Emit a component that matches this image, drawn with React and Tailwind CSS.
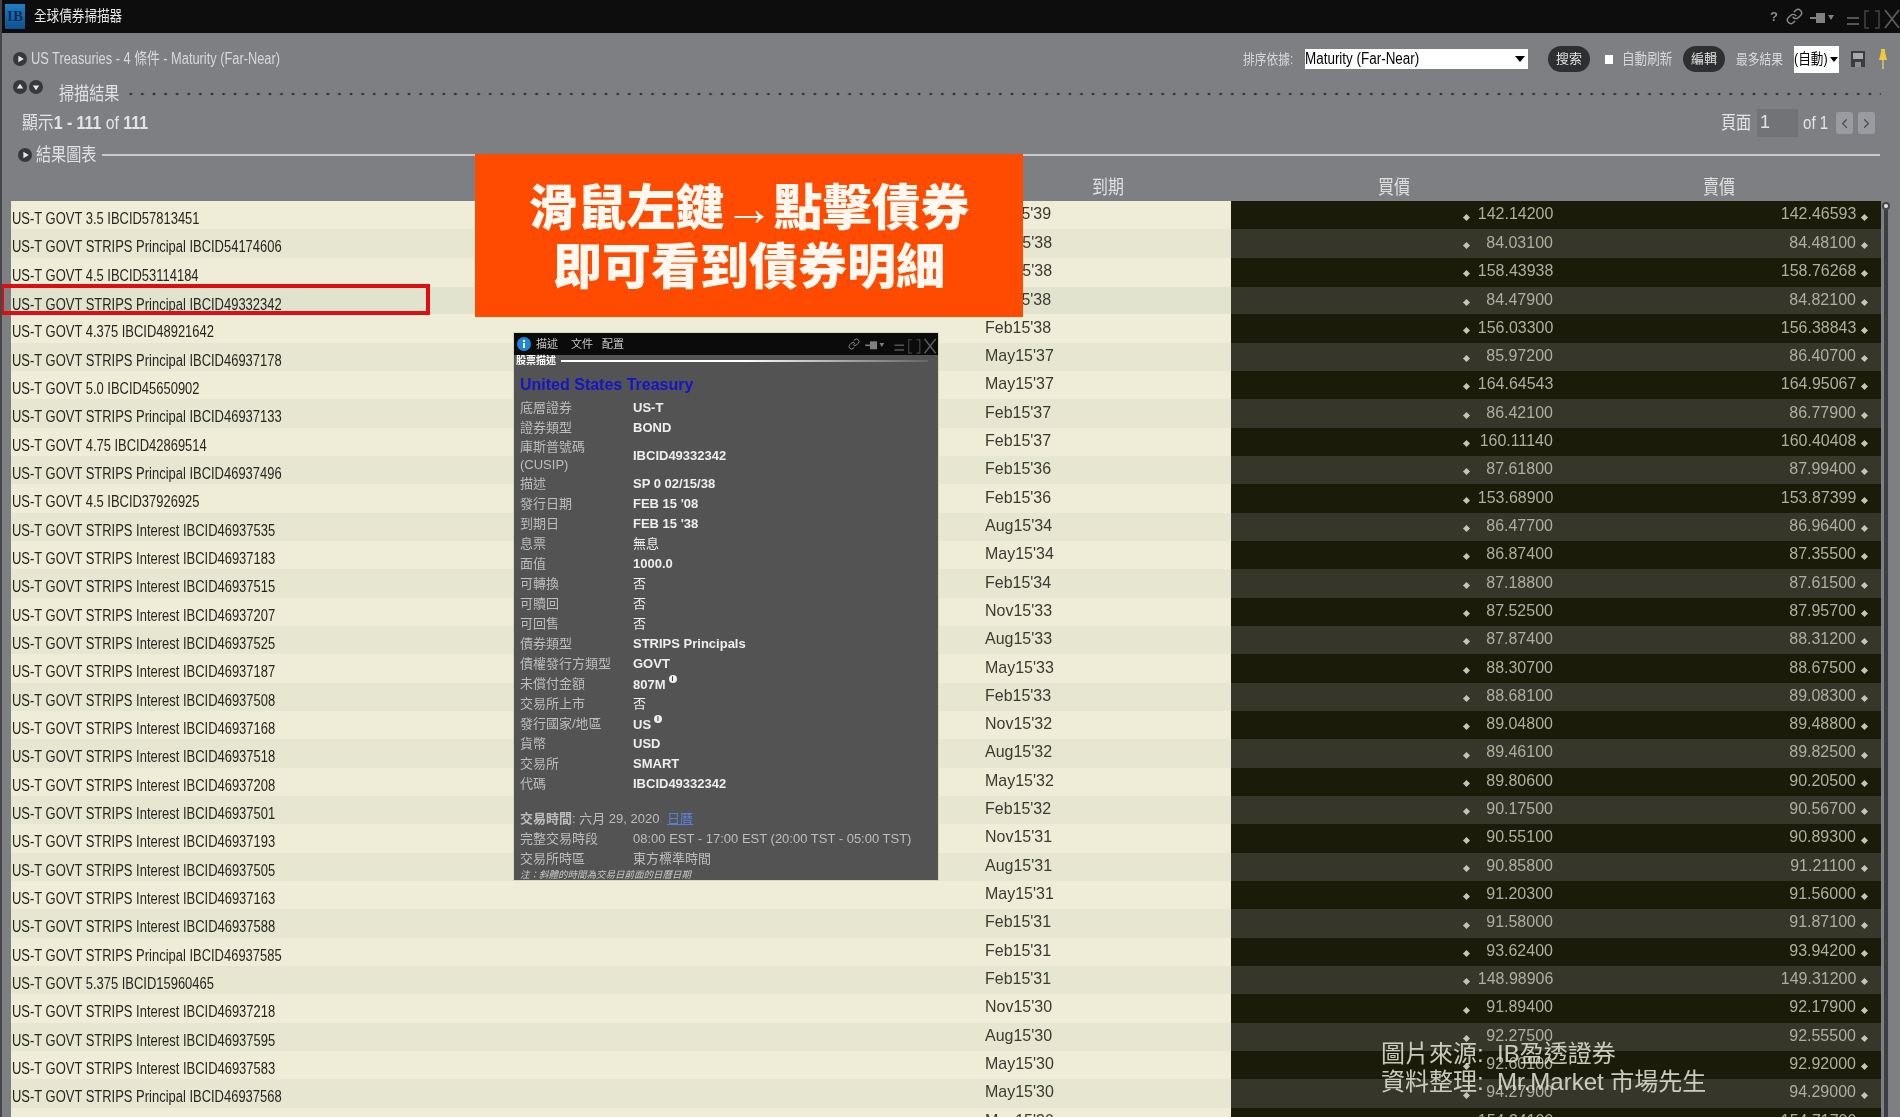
import { ChevronLeft, ChevronRight, Link } from 'lucide-react';

const P = 'US-T GOVT STRIPS Principal IBCID';
const I = 'US-T GOVT STRIPS Interest IBCID';

const rows = [
  ['US-T GOVT 3.5 IBCID57813451', "Feb15'39", '142.14200', '142.46593'],
  [P + '54174606', "Nov15'38", '84.03100', '84.48100'],
  ['US-T GOVT 4.5 IBCID53114184', "Aug15'38", '158.43938', '158.76268'],
  [P + '49332342', "Feb15'38", '84.47900', '84.82100'],
  ['US-T GOVT 4.375 IBCID48921642', "Feb15'38", '156.03300', '156.38843'],
  [P + '46937178', "May15'37", '85.97200', '86.40700'],
  ['US-T GOVT 5.0 IBCID45650902', "May15'37", '164.64543', '164.95067'],
  [P + '46937133', "Feb15'37", '86.42100', '86.77900'],
  ['US-T GOVT 4.75 IBCID42869514', "Feb15'37", '160.11140', '160.40408'],
  [P + '46937496', "Feb15'36", '87.61800', '87.99400'],
  ['US-T GOVT 4.5 IBCID37926925', "Feb15'36", '153.68900', '153.87399'],
  [I + '46937535', "Aug15'34", '86.47700', '86.96400'],
  [I + '46937183', "May15'34", '86.87400', '87.35500'],
  [I + '46937515', "Feb15'34", '87.18800', '87.61500'],
  [I + '46937207', "Nov15'33", '87.52500', '87.95700'],
  [I + '46937525', "Aug15'33", '87.87400', '88.31200'],
  [I + '46937187', "May15'33", '88.30700', '88.67500'],
  [I + '46937508', "Feb15'33", '88.68100', '89.08300'],
  [I + '46937168', "Nov15'32", '89.04800', '89.48800'],
  [I + '46937518', "Aug15'32", '89.46100', '89.82500'],
  [I + '46937208', "May15'32", '89.80600', '90.20500'],
  [I + '46937501', "Feb15'32", '90.17500', '90.56700'],
  [I + '46937193', "Nov15'31", '90.55100', '90.89300'],
  [I + '46937505', "Aug15'31", '90.85800', '91.21100'],
  [I + '46937163', "May15'31", '91.20300', '91.56000'],
  [I + '46937588', "Feb15'31", '91.58000', '91.87100'],
  [P + '46937585', "Feb15'31", '93.62400', '93.94200'],
  ['US-T GOVT 5.375 IBCID15960465', "Feb15'31", '148.98906', '149.31200'],
  [I + '46937218', "Nov15'30", '91.89400', '92.17900'],
  [I + '46937595', "Aug15'30", '92.27500', '92.55500'],
  [I + '46937583', "May15'30", '92.60100', '92.92000'],
  [P + '46937568', "May15'30", '94.27900', '94.29000'],
  ['US-T GOVT 6.25 IBCID11223344', "May15'30", '154.34100', '154.71700'],
];

const details = [
  ['底層證券', 'US-T'],
  ['證券類型', 'BOND'],
  ['庫斯普號碼 (CUSIP)', 'IBCID49332342'],
  ['描述', 'SP 0 02/15/38'],
  ['發行日期', "FEB 15 '08"],
  ['到期日', "FEB 15 '38"],
  ['息票', '無息', false, true],
  ['面值', '1000.0'],
  ['可轉換', '否', false, true],
  ['可贖回', '否', false, true],
  ['可回售', '否', false, true],
  ['債券類型', 'STRIPS Principals'],
  ['債權發行方類型', 'GOVT'],
  ['未償付金額', '807M', true],
  ['交易所上市', '否', false, true],
  ['發行國家/地區', 'US', true],
  ['貨幣', 'USD'],
  ['交易所', 'SMART'],
  ['代碼', 'IBCID49332342'],
];

// source screenshot is squeezed sideways, so text gets narrowed too
function Sq({ children, className = '' }) {
  return <span className={`inline-block origin-left scale-x-[0.84] whitespace-nowrap ${className}`}>{children}</span>;
}

function RoundIcon({ dir = 'right', className = '' }) {
  const pts = { right: '5,3.5 10,6.5 5,9.5', up: '3.5,8 6.5,3.5 9.5,8', down: '3.5,5 6.5,9.5 9.5,5' }[dir];
  return (
    <svg viewBox="0 0 13 13" className={`w-[14px] h-[14px] shrink-0 ${className}`}>
      <circle cx="6.5" cy="6.5" r="6.5" fill="#37383b" />
      <polygon points={pts} fill="#e8e8e8" />
    </svg>
  );
}

function WindowIcons({ small }) {
  return (
    <svg viewBox="0 0 135 24" className={small ? 'w-[108px] h-[19px]' : 'w-[135px] h-[24px]'} fill="none">
      <path d="M45 13h6" stroke="#808080" strokeWidth="2" />
      <path d="M51 8h9v10h-9z" fill="#808080" />
      <polygon points="63,10 69,10 66,15" fill="#808080" />
      <path d="M82 13h12M82 19h12" stroke="#555" strokeWidth="2" />
      <path d="M104 6h-4v17h4M110 6h4v17h-4" stroke="#444" strokeWidth="1.5" />
      <path d="M120 5l14 18M134 5l-14 18" stroke="#5c5c5c" strokeWidth="1.8" />
    </svg>
  );
}

function InfoDot() {
  return (
    <span className="inline-flex items-center justify-center w-[8px] h-[8px] rounded-full bg-[#eeeeee] text-[7px] leading-none font-bold text-[#333] ml-[3px] align-[7px]">i</span>
  );
}

function Row({ row, index }) {
  const [name, maturity, bid, ask] = row;
  const even = index % 2 === 1;
  const selected = index === 3;
  return (
    <div className={`grid grid-cols-[974px_246px_326px_324px] h-[28.33px] box-border ${selected ? 'border-y border-r border-[#8f8f7c]' : ''}`}>
      <div className={`flex items-center pt-[6px] pl-px text-[16px] text-[#262621] ${selected ? 'bg-[#e2e3ce]' : even ? 'bg-[#e7e6d1]' : 'bg-[#efedd7]'}`}>
        <span className="inline-block origin-left scale-x-[0.81] whitespace-nowrap">{name}</span>
      </div>
      <div className={`flex items-center pb-[4px] text-[17px] text-[#3a3a32] ${selected ? 'bg-[#e2e3ce]' : even ? 'bg-[#e7e6d1]' : 'bg-[#efedd7]'}`}>
        <span className="inline-block origin-left scale-x-[0.94] whitespace-nowrap">{maturity}</span>
      </div>
      <div className={`flex items-center justify-end pb-[4px] pr-[4px] text-[17px] text-[#aeaea2] ${even ? 'bg-[#36362a]' : 'bg-[#1b1b09]'}`}>
        <span className="w-[5px] h-[5px] rotate-45 bg-[#c4c4b8] mt-[6px]" />
        <span className="w-[84px] text-right"><span className="inline-block origin-right scale-x-[0.94]">{bid}</span></span>
      </div>
      <div className={`flex items-center justify-end gap-[6px] pb-[4px] pr-[14px] text-[17px] text-[#aeaea2] ${even ? 'bg-[#36362a]' : 'bg-[#1b1b09]'}`}>
        <span className="inline-block origin-right scale-x-[0.94]">{ask}</span>
        <span className="w-[5px] h-[5px] rotate-45 bg-[#c4c4b8] mt-[6px]" />
      </div>
    </div>
  );
}

function DetailPopup() {
  return (
    <div className="absolute left-[511px] top-[332px] w-[426px] h-[549px] bg-[#535353] border border-[#d8d6bc] text-[13px] text-[#bdbdbd] overflow-hidden">
      <div className="flex items-center h-[22px] bg-[#0b0b0b] pl-[3px] pr-[1px] text-[11px] text-[#c8c8c8]">
        <svg viewBox="0 0 14 14" className="w-[14px] h-[14px] mr-[5px]">
          <circle cx="7" cy="7" r="7" fill="#1e86d8" />
          <rect x="6" y="6" width="2" height="5" fill="#fff" />
          <rect x="6" y="3" width="2" height="2" fill="#fff" />
        </svg>
        <span className="mr-[13px]">描述</span>
        <span className="mr-[9px]">文件</span>
        <span>配置</span>
        <Link className="ml-auto w-[12px] h-[12px] text-[#8a8a8a] -mr-[31px]" />
        <WindowIcons small />
      </div>
      <div className="flex items-center h-[11px] pl-[2px] pr-[10px] text-[10px] font-bold text-white">
        <span className="mr-[5px] leading-none">股票描述</span>
        <span className="h-[2px] flex-1 bg-gradient-to-r from-white via-white to-[#666]" />
      </div>
      <div className="pl-[6px] pt-[6px]">
        <div className="text-[16px] leading-[26px] font-bold text-[#1414c8]">United States Treasury</div>
        <div>
          {details.map(([label, value, info, plain]) => (
            <div key={label} className="grid grid-cols-[113px_1fr] items-center min-h-[20px] leading-[18px]">
              <span className={label.includes('CUSIP') ? 'w-[90px]' : ''}>{label}</span>
              <span className={`text-[#eeeeee] ${plain ? 'font-normal' : 'font-bold'}`}>{value}{info && <InfoDot />}</span>
            </div>
          ))}
        </div>
        <div className="mt-[15px] leading-[20px]">
          <b>交易時間</b>: 六月 29, 2020 <span className="ml-[4px] text-[#5b7fd8] underline">日曆</span>
        </div>
        <div className="grid grid-cols-[113px_1fr] leading-[20px]">
          <span>完整交易時段</span>
          <span>08:00 EST - 17:00 EST (20:00 TST - 05:00 TST)</span>
          <span>交易所時區</span>
          <span>東方標準時間</span>
        </div>
        <div className="text-[9.5px] leading-[12px] italic text-[#c8c8c8]">注：斜體的時間為交易日前面的日曆日期</div>
      </div>
    </div>
  );
}

export default function App() {
  return (
    <div className="relative w-[1900px] h-[1117px] overflow-hidden bg-[#7e7f83] blur-[0.3px] font-['Liberation_Sans','Noto_Sans_CJK_TC',sans-serif] border-l-2 border-[#45464a]">
      {/* title bar */}
      <div className="flex items-center h-[33px] bg-[#0d0d0d] pl-[3px]">
        <div className="flex items-center justify-center w-[20px] h-[25px] bg-gradient-to-b from-[#1f7fc4] to-[#10508f] text-[15px] font-bold font-['Liberation_Serif',serif] text-[#0a2c55]">IB</div>
        <span className="ml-[9px] text-[15px] text-[#e8e8e8]"><Sq>全球債券掃描器</Sq></span>
        <span className="ml-auto text-[13px] font-bold text-[#8d8d8d] mr-[8px]">?</span>
        <Link className="w-[17px] h-[17px] text-[#8a8a8a] -mr-[38px]" />
        <WindowIcons />
      </div>

      {/* scanner toolbar */}
      <div className="flex items-center h-[52px] pl-[11px] pr-[9px] text-[#d9d9d9]">
        <RoundIcon />
        <span className="ml-[4px] text-[16px] w-[1212px]">
          <span className="inline-block origin-left scale-x-[0.8] whitespace-nowrap">US Treasuries - 4 條件 - Maturity (Far-Near)</span>
        </span>
        <span className="text-[14px] w-[62px]"><Sq>排序依據:</Sq></span>
        <div className="flex items-center justify-between w-[223px] h-[20px] bg-white text-black text-[16px] pr-[3px]">
          <Sq>Maturity (Far-Near)</Sq>
          <span className="w-0 h-0 border-x-[5px] border-x-transparent border-t-[6px] border-t-black" />
        </div>
        <button className="ml-[20px] w-[42px] h-[26px] rounded-full bg-[#2e2f30] text-[13px] text-[#e4e4e4]">搜索</button>
        <span className="ml-[15px] w-[8px] h-[9px] bg-white" />
        <span className="ml-[9px] w-[61px] text-[15px]"><Sq>自動刷新</Sq></span>
        <button className="w-[42px] h-[26px] rounded-full bg-[#2e2f30] text-[13px] text-[#e4e4e4]">編輯</button>
        <span className="ml-[11px] w-[58px] text-[14px]"><Sq>最多結果</Sq></span>
        <div className="flex items-center justify-between w-[45px] h-[27px] bg-white text-black text-[15px] pr-[1px]">
          <span className="w-[36px] whitespace-nowrap"><Sq>(自動)</Sq></span>
          <span className="w-0 h-0 border-x-[4px] border-x-transparent border-t-[5px] border-t-black" />
        </div>
        <svg viewBox="0 0 14 16" className="ml-[12px] w-[14px] h-[16px]">
          <path d="M0 0h14v16H0z" fill="#3b3c40" />
          <path d="M2 2h10v6H2z" fill="#a8a9ad" />
          <path d="M4 11h6v5H4z" fill="#8d8e92" />
        </svg>
        <svg viewBox="0 0 8 20" className="ml-[14px] w-[8px] h-[20px]">
          <path d="M2 0h4v3l2 8H0l2-8z" fill="#f0c93a" />
          <path d="M4 11v9" stroke="#d8c37a" strokeWidth="1.5" />
        </svg>
      </div>

      {/* results heading with dots */}
      <div className="flex items-center h-[18px] pl-[11px] pr-[19px]">
        <div className="flex gap-[2px] -mt-[14px]">
          <RoundIcon dir="up" />
          <RoundIcon dir="down" />
        </div>
        <span className="ml-[16px] w-[66px] text-[18px] text-[#e2e2e2]"><Sq>掃描結果</Sq></span>
        <span className="flex-1 h-[4px] bg-[radial-gradient(circle,#333_1.4px,transparent_1.6px)] bg-[length:11.6px_4px]" />
      </div>

      {/* paging */}
      <div className="flex items-center h-[40px] pl-[20px] pr-[25px] text-[18px] text-[#e4e4e4]">
        <span className="inline-block origin-left scale-x-[0.88] whitespace-nowrap">顯示<b>1 - 111</b> of <b>111</b></span>
        <span className="ml-auto w-[36px]"><Sq>頁面</Sq></span>
        <span className="w-[41px] h-[28px] bg-[#727377] pl-[3px] leading-[26px]">1</span>
        <span className="ml-[5px] w-[33px]"><Sq>of 1</Sq></span>
        <span className="flex items-center justify-center w-[17px] h-[22px] rounded-[3px] bg-[#9a9ba0]"><ChevronLeft className="w-[15px] h-[15px] text-[#4d4e52]" /></span>
        <span className="ml-[5px] flex items-center justify-center w-[17px] h-[22px] rounded-[3px] bg-[#9a9ba0]"><ChevronRight className="w-[15px] h-[15px] text-[#4d4e52]" /></span>
      </div>

      {/* chart section */}
      <div className="flex items-center h-[24px] pl-[16px] pr-[20px] text-[18px] text-[#e2e2e2]">
        <RoundIcon />
        <span className="ml-[4px] w-[66px]"><Sq>結果圖表</Sq></span>
        <span className="flex-1 h-[2px] bg-[#c9c9cb]" />
      </div>

      {/* column headers */}
      <div className="grid grid-cols-[974px_246px_326px_324px] h-[34px] ml-[9px] pt-[9px] text-[19px] leading-[24px] text-[#e0e0e0]">
        <span />
        <span className="text-center"><span className="inline-block scale-x-[0.84]">到期</span></span>
        <span className="text-center"><span className="inline-block scale-x-[0.84]">買價</span></span>
        <span className="text-center"><span className="inline-block scale-x-[0.84]">賣價</span></span>
      </div>

      {/* results table */}
      <div className="relative ml-[9px] w-[1870px]">
        {rows.map((row, i) => <Row key={i} row={row} index={i} />)}
      </div>

      {/* scrollbar */}
      <div className="absolute left-[1880px] top-[202px] bottom-0 w-[8px] flex flex-col items-center">
        <span className="w-[8px] h-[8px] rounded-full bg-[#e8e8e8] border-2 border-[#44454a]" />
        <span className="flex-1 w-[4px] bg-[#3d3e44]" />
      </div>

      {/* red highlight on the selected row */}
      <div className="absolute -left-[2px] top-[284px] w-[430px] h-[31px] border-[4px] border-[#dd0d12]" />

      {/* orange callout */}
      <div className="absolute left-[473px] top-[154px] w-[548px] h-[163px] pt-[4px] bg-[#ff4b00] flex flex-col items-center justify-center text-[49px] leading-[59px] font-black text-[#fff8f0]">
        <span>滑鼠左鍵→點擊債券</span>
        <span>即可看到債券明細</span>
      </div>

      <DetailPopup />

      {/* source credit */}
      <div className="absolute left-[1379px] top-[1040px] text-[24px] leading-[28px] text-[#e6e6da]/85">
        <div>圖片來源:&nbsp;&nbsp;IB盈透證券</div>
        <div>資料整理:&nbsp;&nbsp;Mr.Market 市場先生</div>
      </div>
    </div>
  );
}
